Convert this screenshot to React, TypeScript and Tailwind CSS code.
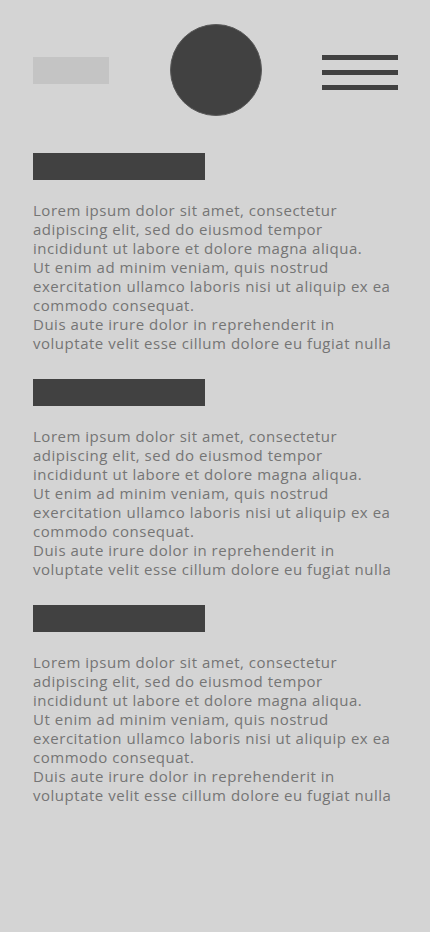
import React from "react";

const lines = [
  "Lorem ipsum dolor sit amet, consectetur",
  "adipiscing elit, sed do eiusmod tempor",
  "incididunt ut labore et dolore magna aliqua.",
  "Ut enim ad minim veniam, quis nostrud",
  "exercitation ullamco laboris nisi ut aliquip ex ea",
  "commodo consequat.",
  "Duis aute irure dolor in reprehenderit in",
  "voluptate velit esse cillum dolore eu fugiat nulla",
];

function Section() {
  return (
    <section className="flex flex-col">
      <div className="w-[172px] h-[27px] bg-[#414141]" />
      <div className="mt-[21px] text-[15px] leading-[19px] tracking-[0.52px] text-[#757575]" style={{ fontFamily: '"Open Sans", sans-serif' }}>
        {lines.map((l, i) => (
          <div key={i} className="whitespace-nowrap">{l}</div>
        ))}
      </div>
    </section>
  );
}

export default function App() {
  return (
    <div className="min-h-[932px] w-full bg-[#d4d4d4]">
      <header className="flex items-center justify-between pl-[33px] pr-[32px] pt-[24px]">
        <div className="w-[76px] h-[27px] bg-[#c4c4c4] mt-[1px]" />
        <div className="w-[92px] h-[92px] rounded-full bg-[#414141] border border-[#5a5a5a] ml-[1px]" />
        <div className="flex flex-col gap-[10px] w-[76px] mt-[4px]">
          <div className="h-[5px] bg-[#414141]" />
          <div className="h-[5px] bg-[#414141]" />
          <div className="h-[5px] bg-[#414141]" />
        </div>
      </header>
      <main className="flex flex-col gap-[26px] px-[33px] mt-[37px]">
        <Section />
        <Section />
        <Section />
      </main>
    </div>
  );
}
